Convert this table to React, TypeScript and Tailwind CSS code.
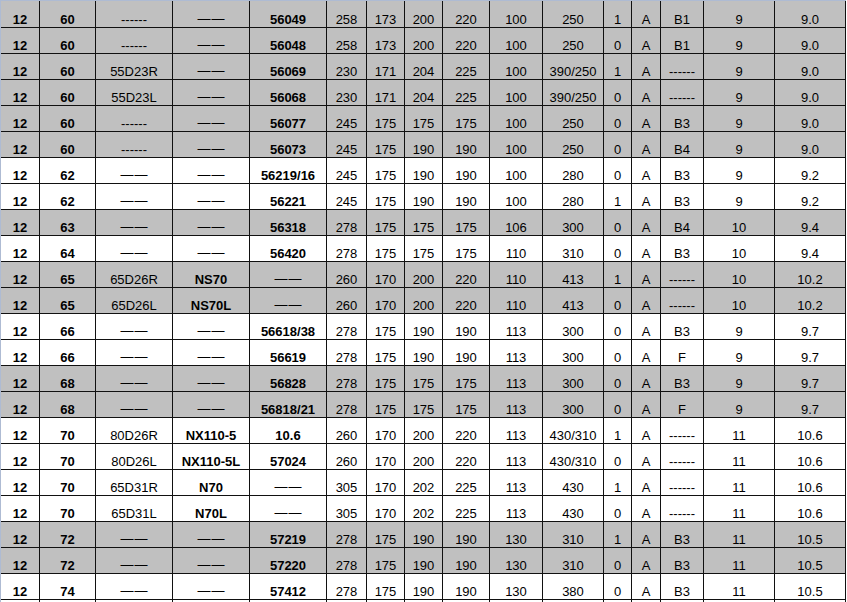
import React from 'react';

type Row = { cells: string[]; gray: boolean };

const raw: [string, boolean][] = [
  ["12|60|------|——|56049|258|173|200|220|100|250|1|A|B1|9|9.0", true],
  ["12|60|------|——|56048|258|173|200|220|100|250|0|A|B1|9|9.0", true],
  ["12|60|55D23R|——|56069|230|171|204|225|100|390/250|1|A|------|9|9.0", true],
  ["12|60|55D23L|——|56068|230|171|204|225|100|390/250|0|A|------|9|9.0", true],
  ["12|60|------|——|56077|245|175|175|175|100|250|0|A|B3|9|9.0", true],
  ["12|60|------|——|56073|245|175|190|190|100|250|0|A|B4|9|9.0", true],
  ["12|62|——|——|56219/16|245|175|190|190|100|280|0|A|B3|9|9.2", false],
  ["12|62|——|——|56221|245|175|190|190|100|280|1|A|B3|9|9.2", false],
  ["12|63|——|——|56318|278|175|175|175|106|300|0|A|B4|10|9.4", true],
  ["12|64|——|——|56420|278|175|175|175|110|310|0|A|B3|10|9.4", false],
  ["12|65|65D26R|NS70|——|260|170|200|220|110|413|1|A|------|10|10.2", true],
  ["12|65|65D26L|NS70L|——|260|170|200|220|110|413|0|A|------|10|10.2", true],
  ["12|66|——|——|56618/38|278|175|190|190|113|300|0|A|B3|9|9.7", false],
  ["12|66|——|——|56619|278|175|190|190|113|300|0|A|F|9|9.7", false],
  ["12|68|——|——|56828|278|175|175|175|113|300|0|A|B3|9|9.7", true],
  ["12|68|——|——|56818/21|278|175|175|175|113|300|0|A|F|9|9.7", true],
  ["12|70|80D26R|NX110-5|10.6|260|170|200|220|113|430/310|1|A|------|11|10.6", false],
  ["12|70|80D26L|NX110-5L|57024|260|170|200|220|113|430/310|0|A|------|11|10.6", false],
  ["12|70|65D31R|N70|——|305|170|202|225|113|430|1|A|------|11|10.6", false],
  ["12|70|65D31L|N70L|——|305|170|202|225|113|430|0|A|------|11|10.6", false],
  ["12|72|——|——|57219|278|175|190|190|130|310|1|A|B3|11|10.5", true],
  ["12|72|——|——|57220|278|175|190|190|130|310|0|A|B3|11|10.5", true],
  ["12|74|——|——|57412|278|175|190|190|130|380|0|A|B3|11|10.5", false],
  ["||||||||||||||||", false],
];

const rows: Row[] = raw.map(([s, gray]) => ({ cells: s.split("|").slice(0, 16), gray }));

// bold on battery type / part number columns
function isBold(col: number, text: string) {
  if (col === 0 || col === 1) return true;
  if ((col === 3 || col === 4) && text !== "——") return true;
  return false;
}

export default function App() {
  return (
    <div className="w-[847px] h-[602px] overflow-hidden bg-white">
      <div
        className="w-[846px] border-t border-l border-[#aebbd3] text-[13px] leading-[15px] text-black"
        style={{ fontFamily: '"Liberation Sans", Arial, sans-serif' }}
      >
        {rows.map((row, i) => (
          <div
            key={i}
            className={`grid grid-cols-[39px_56px_77px_77px_77px_40px_38px_38px_47px_53px_61px_28px_29px_43px_71px_71px] ${
              i === 0 ? "h-[27px]" : "h-[26px]"
            } ${row.gray ? "bg-[#c0c0c0]" : "bg-white"}`}
          >
            {row.cells.map((c, j) => (
              <div
                key={j}
                className={`flex items-end justify-center whitespace-nowrap border-r border-b border-[#111] ${
                  isBold(j, c) ? "font-bold" : "font-normal"
                }`}
              >
                {c === "——" ? (
                  <span className="flex gap-px pb-px">
                    <span>—</span>
                    <span>—</span>
                  </span>
                ) : (
                  c
                )}
              </div>
            ))}
          </div>
        ))}
      </div>
    </div>
  );
}
